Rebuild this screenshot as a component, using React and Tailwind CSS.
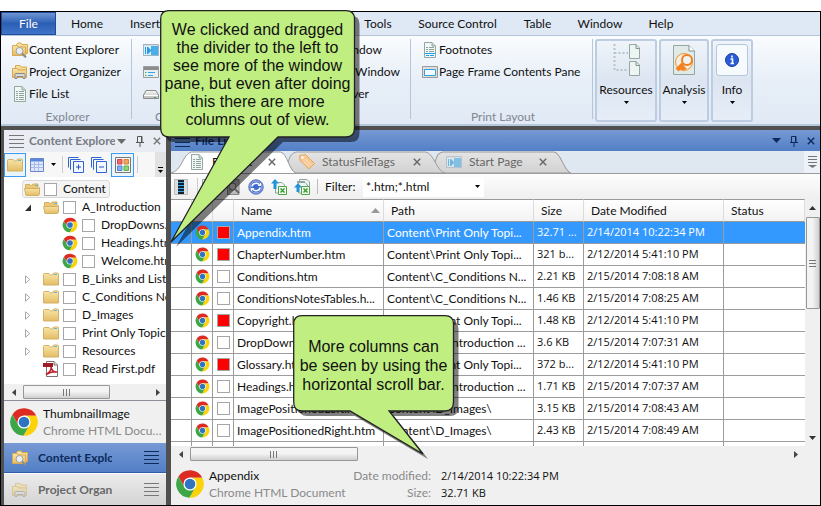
import React from 'react';

const line = { fill: 'none', strokeLinecap: 'butt' };

function Defs() {
  return (
    <svg className="absolute h-0 w-0" aria-hidden="true">
      <defs>
        <linearGradient id="fold" x1="0" y1="0" x2="0" y2="1">
          <stop offset="0" stopColor="#f9e7a9" />
          <stop offset="1" stopColor="#e4bc66" />
        </linearGradient>
        <linearGradient id="chip" x1="0" y1="0" x2="0" y2="1">
          <stop offset="0" stopColor="#f8f8f8" />
          <stop offset="1" stopColor="#b9b9b9" />
        </linearGradient>
        <linearGradient id="tabGrey" x1="0" y1="0" x2="0" y2="1">
          <stop offset="0" stopColor="#e4e4e4" />
          <stop offset="1" stopColor="#d2d2d2" />
        </linearGradient>
      </defs>
    </svg>
  );
}

function Chrome({ className = 'size-4' }) {
  return (
    <svg viewBox="0 0 48 48" className={`${className} shrink-0`} aria-hidden="true">
      <path d="M5.5 12A22 22 0 0 1 43.6 14L24 14L24 24L15.3 29Z" fill="#dd2b23" />
      <path d="M43.6 14A22 22 0 0 1 22.9 46L32.7 29L24 24L24 14Z" fill="#fcd209" />
      <path d="M22.9 46A22 22 0 0 1 5.5 12L15.3 29L24 24L32.7 29Z" fill="#3da747" />
      <circle cx="24" cy="24" r="10.5" fill="#fff" />
      <circle cx="24" cy="24" r="8.5" fill="#2f74c0" />
    </svg>
  );
}

function Folder({ className = 'h-4 w-4' }) {
  return (
    <svg viewBox="0 0 16 16" className={`${className} shrink-0`} aria-hidden="true">
      <path d="M.5 14V3.5Q.5 2.5 1.5 2.5H6L7.500 4H9.500L10.500 2H14.500Q15.500 2 15.500 3V14Z" fill="url(#fold)" stroke="#d3b066" />
      <path d="M11 3.500H14" stroke="#58b8e0" />
    </svg>
  );
}

function OpenFolder() {
  return (
    <svg viewBox="0 0 16 16" className="size-4 shrink-0" aria-hidden="true">
      <path d="M1.500 13V3.500H6L7.500 5L9 3H14V13Z" fill="#ecc873" stroke="#d3b066" />
      <path d="M11 4.500H14" stroke="#58b8e0" />
      <path d="M.5 7.500H14.500L15.500 6.500V13L14.500 14.500H2Z" fill="url(#fold)" stroke="#d3b066" />
    </svg>
  );
}

function FolderSearch() {
  return (
    <svg viewBox="0 0 16 16" className="size-4 shrink-0" aria-hidden="true">
      <path d="M4.500 11.500V2.500L6 1H9L10 2.500H15.500V11.500Z" fill="url(#fold)" stroke="#d9a950" />
      <path d="M.5 13.500V3.500H5L6 5H13.500V13.500Z" fill="url(#fold)" stroke="#d9a950" />
      <circle cx="7.500" cy="9" r="3.500" fill="#e6eef4" stroke="#a0a0a0" />
      <path d="M10 11.500L14 15.500" stroke="#8b8b8b" strokeWidth="2" />
    </svg>
  );
}

function FolderTray({ faded }) {
  return (
    <svg viewBox="0 0 16 16" className={faded ? 'size-4 shrink-0 opacity-50' : 'size-4 shrink-0'} aria-hidden="true">
      <path d="M3.500 10V1.500H8L9 3H14.500V10Z" fill="url(#fold)" stroke="#d9a950" />
      <path d="M.5 13.500V4.500H5L6 6H14.500V13.500Z" fill="url(#fold)" stroke="#d9a950" />
      <path d="M3 14.500V10.500Q3 9.500 4 9.500H12Q13 9.500 13 10.500V14.500H11V12.500H5V14.500Z" fill="#d8d8d8" stroke="#8a8a8a" />
    </svg>
  );
}

function Doc({ accent }) {
  return (
    <svg viewBox="0 0 16 16" className="size-4 shrink-0" aria-hidden="true">
      <path d="M2.500.5H10L13.500 4V15.500H2.500Z" fill="#f2f8f6" stroke="#93a8a2" />
      <path d="M10 .5V4H13.500" fill="#c9d8d3" stroke="#93a8a2" />
      <path d="M4 5.500H6M7 5.500H12M4 7.500H6M7 7.500H12M4 9.500H6M7 9.500H12" stroke="#8fa39e" />
      {accent ? (
        <path d="M3 11.500H13M4 13.500H7M8 13.500H12" stroke="#18a0ea" />
      ) : (
        <path d="M4 11.500H6M7 11.500H12M4 13.500H6M7 13.500H12" stroke="#8fa39e" />
      )}
    </svg>
  );
}

function Frame() {
  return (
    <svg viewBox="0 0 16 16" className="size-4 shrink-0" aria-hidden="true">
      <path d="M.5 2.500H15.500V13.500H.5Z" fill="#ddd" stroke="#9a9a9a" />
      <path d="M2.500 5.500H13.500V11.500H2.500Z" fill="#f4fafd" stroke="#2ca0e0" />
    </svg>
  );
}

function PlayPane({ faded }) {
  return (
    <svg viewBox="0 0 16 16" className={faded ? 'size-4 shrink-0 opacity-60' : 'size-4 shrink-0'} aria-hidden="true">
      <path d="M.5 2.500H15.500V13.500H.5Z" fill="#4aaee8" stroke="#9fb4c0" />
      <path d="M1 3.500H15" stroke="#d5dde2" />
      <path d="M1 4H8V13H1Z" fill="#d7eefb" />
      <path d="M2.500 5V12M4.500 5L8 8.500L4.500 12Z" fill="#2a9be2" stroke="#2a9be2" />
    </svg>
  );
}

function ListPane() {
  return (
    <svg viewBox="0 0 16 16" className="size-4 shrink-0" aria-hidden="true">
      <path d="M.5 2.500H15.500V13.500H.5Z" fill="#e9eef0" stroke="#9c9c9c" />
      <path d="M1 4.500H15" stroke="#8d8d8d" strokeWidth="3" />
      <path d="M2 8.500H3.500M2 11.500H3.500" stroke="#42b53c" />
      <path d="M5 8.500H12M5 11.500H10" stroke="#2da4e8" />
    </svg>
  );
}

function Drive() {
  return (
    <svg viewBox="0 0 16 16" className="size-4 shrink-0" aria-hidden="true">
      <path d="M3 4.500H13L15.500 9V12.500H.5V9Z" fill="url(#chip)" stroke="#8b8b8b" />
      <path d="M1 9.500H15" stroke="#fff" />
      <path d="M11 11.500H13" stroke="#49a04c" />
    </svg>
  );
}

function Pdf() {
  return (
    <svg viewBox="0 0 16 16" className="size-4 shrink-0" aria-hidden="true">
      <path d="M3.500 .5H11L14.500 4V15.500H3.500Z" fill="#fff" stroke="#7f7070" />
      <path d="M11 .5V4H14.500" fill="#ddd" stroke="#7f7070" />
      <path d="M0 2H10V6H0Z" fill="#a21a22" />
      <path d="M3 13.500C7 11 8.500 8 8 6C9 10 11 11.500 14 11C10 10 7 11 3 13.500Z" fill="none" stroke="#c01c26" strokeWidth="1.500" />
    </svg>
  );
}

function Tag() {
  return (
    <svg viewBox="0 0 16 16" className="size-4 shrink-0" aria-hidden="true">
      <path d="M.5 1.500L6.500 .5L15.500 9.500L10 15L1 6.500Z" fill="#f6c993" stroke="#e2a866" />
      <circle cx="3.500" cy="3.500" r="1.300" fill="#fff" />
      <path d="M6 5L12 11M4.500 7L10 12.500" stroke="#fbe5c9" />
    </svg>
  );
}

function Burger({ color }) {
  return (
    <svg viewBox="0 0 15 15" className="size-[15px] shrink-0" aria-hidden="true">
      <path d="M0 1.500H15M0 5.500H15M0 9.500H15M0 13.500H15" stroke={color} />
    </svg>
  );
}

function Pin({ color }) {
  return (
    <svg viewBox="0 0 8 12" className="h-3 w-2 shrink-0" aria-hidden="true">
      <path d="M1.500 7V1.500H6V7M5.500 1.500V7M0 7.500H8M4 8V12" {...line} stroke={color} />
    </svg>
  );
}

function Cross({ color }) {
  return (
    <svg viewBox="0 0 8 8" className="size-2 shrink-0" aria-hidden="true">
      <path d="M.8 .8L7.200 7.200M7.200 .8L.8 7.200" {...line} stroke={color} strokeWidth="1.400" />
    </svg>
  );
}

function Down({ color = '#000', className = 'h-[3px] w-[5px]' }) {
  return (
    <svg viewBox="0 0 10 6" preserveAspectRatio="none" className={`${className} shrink-0`} aria-hidden="true">
      <path d="M0 0H10L5 6Z" fill={color} />
    </svg>
  );
}

function SheetExport({ stack }) {
  return (
    <svg viewBox="0 0 16 16" className="size-4 shrink-0" aria-hidden="true">
      {stack && <path d="M5.500 4V.5H13L15.500 3V8M3.500 4V2.500H11" fill="#eef5f2" stroke="#8fa39e" />}
      <path d="M4.500 3.500H11L13.500 6V14H4.500Z" fill="#eef5f2" stroke="#8fa39e" />
      {stack ? (
        <path d="M4 4L0 8.500H2.500V13H5.500V8.500H8Z" fill="#2493d8" />
      ) : (
        <path d="M4 0L0 4.500H2.500V10H5.500V4.500H8Z" fill="#2493d8" />
      )}
      <path d="M7.500 7.500H15.500V15.500H7.500Z" fill="#f3fbf1" stroke="#4da644" />
      <path d="M9.500 9.500L13.500 13.500M13.500 9.500L9.500 13.500" stroke="#3c9b34" strokeWidth="1.500" />
    </svg>
  );
}

function RibbonItem({ icon, label, children }) {
  return (
    <button type="button" aria-label={label} className="flex h-[22px] items-center gap-px whitespace-nowrap">
      {icon}
      {children && <span>{children}</span>}
    </button>
  );
}

function RibbonGroup({ title, children, className, titleClass = 'text-center' }) {
  return (
    <div className={`flex h-[80px] shrink-0 flex-col border-r border-[#b4c6da] ${className}`}>
      <div className="flex h-[66px] shrink-0 flex-col items-start">{children}</div>
      <div className={`pt-[2px] leading-[20px] text-[#828790] ${titleClass}`}>{title}</div>
    </div>
  );
}

function BigButton({ label, icon, className }) {
  return (
    <button
      type="button"
      className={`flex h-[83px] flex-col items-center rounded-[3px] border-2 border-[#bccde1] bg-linear-to-b from-[#eff4fa] via-[#dce5f1] to-[#e6edf7] ${className}`}
    >
      <span className="mt-[2px] flex h-[34px] items-center">{icon}</span>
      <span className="mt-[5px] leading-[16px]">{label}</span>
      <Down className="mt-[3px] h-[3px] w-[5px]" />
    </button>
  );
}

const menu = [
  ['Home', 'ml-[2px] w-[58px]'],
  ['Insert', 'mr-[177px] w-[58px]'],
  ['Tools', 'w-[54px]'],
  ['Source Control', 'w-[105px]'],
  ['Table', 'w-[55px]'],
  ['Window', 'w-[70px]'],
  ['Help', 'w-[52px]'],
];

function Ribbon() {
  return (
    <header>
      <nav className="flex h-[24px] overflow-hidden border-b border-[#b4c6da] bg-[#dfe9f5]">
        <button type="button" className="w-[55px] shrink-0 border border-[#1e4b9b] bg-linear-to-b from-[#6f94d2] via-[#2b5fb4] to-[#3f74c9] text-white">
          File
        </button>
        {menu.map(([name, cls]) => (
          <button key={name} type="button" className={`shrink-0 ${cls}`}>
            {name}
          </button>
        ))}
      </nav>
      <div className="flex h-[90px] items-start overflow-hidden border-b-2 border-[#b4cadb] bg-linear-to-b from-[#fafcfe] via-[#e8eff8] to-[#e0e9f5] pt-[3px]">
        <RibbonGroup title="Explorer" className="w-[131px] pr-2 pl-[11px]">
          <RibbonItem icon={<FolderSearch />}>Content Explorer</RibbonItem>
          <RibbonItem icon={<FolderTray />}>Project Organizer</RibbonItem>
          <RibbonItem icon={<Doc />}>File List</RibbonItem>
        </RibbonGroup>
        <RibbonGroup title="C" titleClass="pl-[12px]" className="w-[196px] border-transparent pl-[11px]">
          <RibbonItem label="Start" icon={<PlayPane />} />
          <RibbonItem label="Tasks" icon={<ListPane />} />
          <RibbonItem label="Disk" icon={<Drive />} />
        </RibbonGroup>
        <RibbonGroup title="" className="w-[83px] pl-[7px]">
          <RibbonItem><span className="pl-[2px]">Window</span></RibbonItem>
          <RibbonItem><span className="pl-5">Window</span></RibbonItem>
          <RibbonItem>Server</RibbonItem>
        </RibbonGroup>
        <RibbonGroup title="Print Layout" className="w-[182px] pr-2 pl-[11px]">
          <RibbonItem icon={<Doc accent />}>Footnotes</RibbonItem>
          <RibbonItem icon={<Frame />}>Page Frame Contents Pane</RibbonItem>
        </RibbonGroup>
        <div className="ml-[2px] flex gap-[2px]">
          <BigButton
            label="Resources"
            className="w-[62px]"
            icon={
              <svg viewBox="0 0 28 32" className="h-8 w-7">
                <path d="M2.500 0V26H16M2.500 9H16" {...line} stroke="#b4c6c2" strokeWidth="2" strokeDasharray="2 2" />
                <path d="M17.500 .5H24L27.500 4V14.500H17.500ZM17.500 17.500H24L27.500 21V31.500H17.500Z" fill="#edf5f2" stroke="#93a8a2" />
                <path d="M24 .5V4.500H27.500M24 17.500V21.500H27.500" {...line} stroke="#7d938d" />
              </svg>
            }
          />
          <BigButton
            label="Analysis"
            className="w-[50px]"
            icon={
              <svg viewBox="0 0 22 30" className="h-[30px] w-[22px]">
                <path d="M.5 .5H16L21.500 6V29.500H.5Z" fill="#e0ebe8" stroke="#93a8a2" />
                <path d="M16 .5V6H21.500" fill="#fff" stroke="#7d938d" />
                <circle cx="11" cy="17" r="8.500" fill="#f1ede3" stroke="#f59231" />
                <circle cx="14" cy="15" r="5" fill="#edf3f3" stroke="#f27f1b" strokeWidth="2" />
                <path d="M10 19L4 25" stroke="#f58220" strokeWidth="4" />
                <path d="M4 22Q8 27 14 24L10 20Z" fill="#f58220" />
              </svg>
            }
          />
          <BigButton
            label="Info"
            className="w-[42px]"
            icon={
              <span className="flex size-8 items-center justify-center rounded-[3px] border border-[#b3c6dc] bg-[#f7fafd]">
                <svg viewBox="0 0 14 14" className="size-[14px]">
                  <circle cx="7" cy="7" r="6.500" fill="#2a5bd7" stroke="#1c3fa0" />
                  <path d="M7 2.500V4.500M5.500 6H7.500V10.500M5.500 10.500H9" {...line} stroke="#fff" strokeWidth="1.600" />
                </svg>
              </span>
            }
          />
        </div>
      </div>
    </header>
  );
}

const treeRows = [
  ['', 'DropDowns.htm', 2, 'chrome'],
  ['', 'Headings.htm', 2, 'chrome'],
  ['', 'Welcome.htm', 2, 'chrome'],
  ['closed', 'B_Links and Lists', 1, 'folder'],
  ['closed', 'C_Conditions Notes', 1, 'folder'],
  ['closed', 'D_Images', 1, 'folder'],
  ['closed', 'Print Only Topics', 1, 'folder'],
  ['closed', 'Resources', 1, 'folder'],
  ['', 'Read First.pdf', 1, 'pdf'],
];

function TreeCheck({ name }) {
  return (
    <input
      type="checkbox"
      aria-label={name}
      className="ml-1 size-[13px] shrink-0 appearance-none border border-[#a6a6a6] bg-white"
    />
  );
}

function Twisty({ kind }) {
  return (
    <svg viewBox="0 0 6 9" className="h-[9px] w-[6px] shrink-0" aria-hidden="true">
      {kind === 'open' && <path d="M6 1.500V8H0Z" fill="#303030" />}
      {kind === 'closed' && <path d="M.5 .8L4.800 4.500L.5 8.200Z" fill="#fff" stroke="#a6a6a6" />}
    </svg>
  );
}

function TreeItem({ kind, name, depth, icon }) {
  return (
    <li className={`flex h-[18px] items-center ${depth === 2 ? 'pl-[40px]' : 'pl-[21px]'}`}>
      <Twisty kind={depth === 1 ? kind : ''} />
      <span className="w-[12px] shrink-0" />
      {icon === 'chrome' && <Chrome />}
      {icon === 'folder' && <Folder />}
      {icon === 'open' && <OpenFolder />}
      {icon === 'pdf' && <Pdf />}
      <TreeCheck name={name} />
      <span className="ml-[6px] whitespace-nowrap">{name}</span>
    </li>
  );
}

function Grip({ vertical }) {
  return <span className={vertical ? 'block h-[7px] w-[7px] bg-[repeating-linear-gradient(to_bottom,#777_0_1px,transparent_1px_3px)]' : 'block h-[7px] w-[8px] bg-[repeating-linear-gradient(to_right,#777_0_1px,transparent_1px_3px)]'} />;
}

function HScroll({ thumb }) {
  return (
    <div className="flex h-4 items-center bg-[#f0f0f0]">
      <span className="flex w-[19px] justify-center">
        <svg viewBox="0 0 4 7" className="h-[7px] w-1"><path d="M4 0V7L0 3.500Z" fill="#444" /></svg>
      </span>
      <div className="flex flex-1">
        <div className={`flex h-[14px] items-center justify-center rounded-[1px] border border-[#979797] bg-linear-to-b from-[#f4f4f4] from-45% to-[#d0d0d0] ${thumb}`}>
          <Grip />
        </div>
      </div>
      <span className="flex w-[17px] justify-center">
        <svg viewBox="0 0 4 7" className="h-[7px] w-1"><path d="M0 0V7L4 3.500Z" fill="#444" /></svg>
      </span>
    </div>
  );
}

function CopyIcon({ plus }) {
  return (
    <svg viewBox="0 0 16 16" className="size-4 shrink-0" aria-hidden="true">
      <path d="M.5 10.500V.5H10.500M3 12.500H2.500V2.500H12.500" {...line} stroke="#2f63d6" />
      <path d="M5.500 4.500H15.500V15.500H5.500Z" fill="#f3f7ff" stroke="#2f63d6" />
      <path d={plus ? 'M8 10H13M10.500 7.500V12.500' : 'M8 10H13'} stroke="#2450c0" />
    </svg>
  );
}

function Explorer() {
  return (
    <aside className="flex w-[162px] shrink-0 flex-col bg-[#f0f0f0]">
      <div className="flex h-[22px] items-center bg-[#e9edf3] pl-[5px]">
        <Burger color="#777" />
        <h2 className="ml-[5px] w-[86px] overflow-hidden font-bold whitespace-nowrap text-[#777c86]">Content Explorer</h2>
        <Down color="#6b6b6b" className="ml-[2px] h-[5px] w-[9px]" />
        <span className="w-[10px]" />
        <Pin color="#555" />
        <span className="w-[9px]" />
        <Cross color="#777" />
      </div>
      <div className="flex h-[25px] items-center bg-[#f7f7f7]">
        <button type="button" aria-label="Folders" className="flex h-[24px] w-[22px] items-center justify-center border border-[#3c9bf0] bg-[#eaf4fd]">
          <Folder />
        </button>
        <button type="button" aria-label="Grid view" className="ml-1 flex items-center">
          <svg viewBox="0 0 14 14" className="size-[14px]">
            <path d="M.5 .5H13.500V13.500H.5Z" fill="#dfe8fa" stroke="#6a86c5" />
            <path d="M1 2H13" stroke="#5c86d6" strokeWidth="3" />
            <path d="M1 6.500H13M1 9.500H13M4.500 4V13M8.500 4V13" stroke="#a9bce6" />
          </svg>
          <Down className="ml-[7px] h-[3px] w-[5px]" />
        </button>
        <span className="ml-[6px] h-[17px] w-px bg-[#ccc]" />
        <button type="button" aria-label="Expand" className="ml-[5px]"><CopyIcon plus /></button>
        <button type="button" aria-label="Collapse" className="ml-[7px]"><CopyIcon /></button>
        <button type="button" aria-label="Colors" className="ml-1 flex h-[24px] w-[23px] items-center justify-center border border-[#3c9bf0] bg-[#eaf4fd]">
          <svg viewBox="0 0 16 16" className="size-4">
            <path d="M.5 .5H15.500V15.500H.5Z" fill="#f6f6f6" stroke="#777" />
            <path d="M2.500 2.500H7V7H2.500Z" fill="#ee6a6a" stroke="#d04848" />
            <path d="M9 2.500H13.500V7H9Z" fill="#f2a35c" stroke="#d98238" />
            <path d="M2.500 9H7V13.500H2.500Z" fill="#7fb0f4" stroke="#4f86d8" />
            <path d="M9 9H13.500V13.500H9Z" fill="#8bd674" stroke="#5cb248" />
          </svg>
        </button>
        <span className="ml-[3px] h-[17px] w-px bg-[#ccc]" />
        <button type="button" aria-label="More" className="ml-auto flex h-[25px] w-[11px] flex-col items-center justify-end bg-[#e2e2e2] pb-1">
          <span className="mb-[2px] h-px w-[5px] bg-black" />
          <Down />
        </button>
      </div>
      <ul className="h-[207px] overflow-hidden bg-white pt-[3px]">
        <li className="flex h-[18px] pl-[18px]">
          <span className="flex items-center rounded-[3px] border border-[#d9d9d9] bg-[#f4f4f4] pr-[3px] pl-px">
            <OpenFolder />
            <TreeCheck name="Content" />
            <span className="ml-[6px]">Content</span>
          </span>
        </li>
        <TreeItem kind="open" name="A_Introduction" depth={1} icon="open" />
        {treeRows.map(([kind, name, depth, icon]) => (
          <TreeItem key={name} kind={kind} name={name} depth={depth} icon={icon} />
        ))}
      </ul>
      <HScroll thumb="w-[87px]" />
      <div className="flex h-[43px] items-center border-t border-[#8c8c9c] pl-[5px]">
        <Chrome className="size-[30px]" />
        <div className="ml-1 min-w-0 leading-[17px]">
          <div>ThumbnailImage</div>
          <div className="truncate text-[#8a8a8a]">Chrome HTML Document</div>
        </div>
      </div>
      <button type="button" className="flex h-[30px] items-center border-b border-[#2f5da8] bg-linear-to-b from-[#7799d4] to-[#527fc6] pl-2 font-bold text-[#0c2a5c]">
        <FolderSearch />
        <span className="ml-[10px] w-[74px] overflow-hidden text-left whitespace-nowrap">Content Explorer</span>
        <span className="ml-8"><Burger color="#0c2a5c" /></span>
      </button>
      <button type="button" className="flex h-[32px] items-center border-t border-white bg-linear-to-b from-[#ebebeb] to-[#d4d4d4] pl-2 font-bold text-[#686868]">
        <FolderTray faded />
        <span className="ml-[10px] w-[74px] overflow-hidden text-left whitespace-nowrap">Project Organizer</span>
        <span className="ml-8"><Burger color="#777" /></span>
      </button>
    </aside>
  );
}

function Tab({ icon, label, className, active }) {
  return (
    <div className={`relative flex h-[22px] items-center ${className}`}>
      <svg viewBox="0 0 160 22" preserveAspectRatio="none" className="absolute inset-0 h-full w-full" aria-hidden="true">
        <path
          d={active ? 'M0 22C14 20 15 3 26 1H140C149 2 151 20 160 22' : 'M0 12C2 4 4 2 9 1H140C149 2 151 20 160 22H6Z'}
          fill={active ? '#fff' : 'url(#tabGrey)'}
          stroke="#9b9b9b"
          vectorEffect="non-scaling-stroke"
        />
      </svg>
      <button type="button" className={`relative flex items-center gap-[7px] whitespace-nowrap ${active ? 'ml-[18px]' : 'ml-[11px] text-[#666]'}`}>
        {icon}
        {label}
      </button>
      <button type="button" aria-label={`Close ${label}`} className={`relative ml-auto ${active ? 'mr-[20px]' : 'mr-[24px]'}`}>
        <Cross color="#666" />
      </button>
    </div>
  );
}

const files = [
  ['Appendix.htm', 'Content\\Print Only Topi...', '32.71 ...', '2/14/2014 10:22:34 PM', 1],
  ['ChapterNumber.htm', 'Content\\Print Only Topi...', '321 b...', '2/12/2014 5:41:10 PM', 1],
  ['Conditions.htm', 'Content\\C_Conditions N...', '2.21 KB', '2/15/2014 7:08:18 AM', 0],
  ['ConditionsNotesTables.h...', 'Content\\C_Conditions N...', '1.46 KB', '2/15/2014 7:08:25 AM', 0],
  ['Copyright.htm', 'Content\\Print Only Topi...', '1.48 KB', '2/12/2014 5:41:10 PM', 1],
  ['DropDowns.htm', 'Content\\A_Introduction ...', '3.6 KB', '2/15/2014 7:07:31 AM', 0],
  ['Glossary.htm', 'Content\\Print Only Topi...', '372 b...', '2/12/2014 5:41:10 PM', 1],
  ['Headings.htm', 'Content\\A_Introduction ...', '1.71 KB', '2/15/2014 7:07:37 AM', 0],
  ['ImagePositionedLeft.htm', 'Content\\D_Images\\', '3.15 KB', '2/15/2014 7:08:43 AM', 0],
  ['ImagePositionedRight.htm', 'Content\\D_Images\\', '2.43 KB', '2/15/2014 7:08:49 AM', 0],
];

const numeric = "font-['Open_Sans','Noto_Sans',sans-serif] text-[11px]";

function FileTable() {
  return (
    <div className="h-[247px] min-w-0 flex-1 overflow-hidden bg-white">
      <table className="w-full table-fixed border-separate border-spacing-0 text-left">
        <colgroup>
          <col className="w-[21px]" />
          <col className="w-[21px]" />
          <col className="w-[21px]" />
          <col className="w-[150px]" />
          <col className="w-[150px]" />
          <col className="w-[50px]" />
          <col className="w-[140px]" />
          <col />
        </colgroup>
        <thead>
          <tr className="h-[23px] bg-linear-to-b from-white to-[#f2f2f2] [&>th]:border-t [&>th]:border-r [&>th]:border-b [&>th]:border-t-[#999] [&>th]:border-r-[#dcdcdc] [&>th]:border-b-[#999] [&>th]:p-0 [&>th]:pl-[7px] [&>th]:font-normal [&>th]:whitespace-nowrap">
            <th />
            <th />
            <th />
            <th>
              <span className="flex items-center justify-between pr-[3px]">
                Name
                <svg viewBox="0 0 9 5" className="h-[5px] w-[9px]"><path d="M0 5H9L4.500 0Z" fill="#999" /></svg>
              </span>
            </th>
            <th>Path</th>
            <th>Size</th>
            <th>Date Modified</th>
            <th>Status</th>
          </tr>
        </thead>
        <tbody>
          {files.map(([name, path, size, date, flag], i) => (
            <tr
              key={name}
              className={`h-[22px] [&>td]:overflow-hidden [&>td]:border-r [&>td]:border-b [&>td]:border-[#9c9c9c] [&>td]:p-0 [&>td]:whitespace-nowrap [&>td:last-child]:border-r-0 ${i === 0 ? 'bg-[#3399ff] text-white' : ''}`}
            >
              <td />
              <td><Chrome className="mx-auto size-[15px]" /></td>
              <td>
                <span className={`mx-auto block size-[13px] border border-[#a6a6a6] ${flag ? 'bg-[#ff0000]' : 'bg-white'}`} />
              </td>
              <td><span className="pl-[3px]">{name}</span></td>
              <td><span className="pl-[3px]">{path}</span></td>
              <td className={numeric}><span className="pl-[3px]">{size}</span></td>
              <td className={numeric}><span className="pl-[3px]">{date}</span></td>
              <td />
            </tr>
          ))}
          <tr className="h-[6px] [&>td]:border-r [&>td]:border-[#9c9c9c] [&>td]:p-0 [&>td:last-child]:border-r-0">
            <td /><td /><td /><td /><td /><td /><td /><td />
          </tr>
        </tbody>
      </table>
    </div>
  );
}

function VScroll() {
  return (
    <div className="flex w-[15px] shrink-0 flex-col items-center bg-[#f0f0f0]">
      <span className="flex h-[18px] items-center"><svg viewBox="0 0 7 4" className="h-1 w-[7px]"><path d="M0 4H7L3.500 0Z" fill="#333" /></svg></span>
      <div className="flex h-[92px] w-[14px] items-center justify-center rounded-[1px] border border-[#979797] bg-linear-to-r from-[#f4f4f4] from-45% to-[#d0d0d0]">
        <Grip vertical />
      </div>
      <span className="mt-auto flex h-[17px] items-center"><Down color="#333" className="h-1 w-[7px]" /></span>
    </div>
  );
}

function FileList() {
  return (
    <main className="flex min-w-0 flex-1 flex-col bg-[#f0f0f0]">
      <div className="flex h-[21px] items-center bg-linear-to-b from-[#7799d4] to-[#527fc6] pr-[5px] pl-1 text-[#0c2a5c]">
        <Burger color="#0c2a5c" />
        <h2 className="ml-[5px] font-bold">File List</h2>
        <Down color="#0c2a5c" className="ml-auto h-[5px] w-[9px]" />
        <span className="w-[9px]" />
        <Pin color="#0c2a5c" />
        <span className="w-[9px]" />
        <Cross color="#0c2a5c" />
      </div>
      <div className="flex h-[23px] border-b border-[#9b9b9b] bg-[#dfe7f1]">
        <Tab active icon={<Doc />} label="File List" className="z-10 w-[125px]" />
        <Tab icon={<Tag />} label="StatusFileTags" className="z-5 -ml-[8px] w-[157px]" />
        <Tab icon={<PlayPane faded />} label="Start Page" className="-ml-[10px] w-[136px]" />
        <button type="button" aria-label="Tab list" className="ml-auto flex w-4 flex-col items-center justify-center bg-[#edf2f8]">
          <svg viewBox="0 0 9 12" className="h-3 w-[9px]">
            <path d="M0 .5H9M0 3.500H9M0 6.500H9" stroke="#777" />
            <path d="M0 9H9L4.500 12Z" fill="#777" />
          </svg>
        </button>
      </div>
      <div className="flex h-[25px] items-center bg-linear-to-b from-[#fdfdfd] to-[#efefef] pl-[3px]">
        <button type="button" aria-label="List">
          <svg viewBox="0 0 14 16" className="h-4 w-[14px]">
            <path d="M.5 .5H13.500V15.500H.5Z" fill="#ddd" stroke="#bbb" />
            <path d="M4 1H10V15H4Z" fill="#123" />
            <path d="M4 3.500H10M4 6.500H10M4 9.500H10M4 12.500H10" stroke="#30a5e8" />
          </svg>
        </button>
        <span className="mr-[2px] ml-[9px] h-[17px] w-px bg-[#ccc]" />
        <button type="button" aria-label="Open" className="mr-[9px]"><Doc /></button>
        <button type="button" aria-label="Preview">
          <svg viewBox="0 0 16 16" className="size-4">
            <path d="M2.500 .5H14V15.500H2.500Z" fill="#bbb" stroke="#888" />
            <circle cx="7.500" cy="7.500" r="3.500" fill="#ddd" stroke="#666" />
            <path d="M10 10L14 14" stroke="#666" strokeWidth="2" />
          </svg>
        </button>
        <button type="button" aria-label="Refresh" className="ml-[7px]">
          <svg viewBox="0 0 16 16" className="size-4">
            <circle cx="8" cy="8" r="7.300" fill="#4169d2" stroke="#7c88ad" />
            <circle cx="8" cy="8" r="6" fill="none" stroke="#9ab4f2" />
            <path d="M4 7.500A4 3.500 0 0 1 11 5.500M12 8.500A4 3.500 0 0 1 5 10.500" {...line} stroke="#fff" strokeWidth="1.700" />
            <path d="M9.500 7H13V3.500ZM6.500 9H3V12.500Z" fill="#fff" />
          </svg>
        </button>
        <button type="button" aria-label="Export" className="ml-[7px]"><SheetExport /></button>
        <button type="button" aria-label="Export all" className="ml-[7px]"><SheetExport stack /></button>
        <span className="mx-[7px] h-[15px] w-px bg-[#bbb]" />
        <label htmlFor="filter" className="w-[30px]">Filter:</label>
        <div className="relative ml-2 flex w-[121px] items-center bg-white">
          <select id="filter" className="h-[20px] w-full appearance-none bg-white pl-[3px]">
            <option>*.htm;*.html</option>
          </select>
          <Down className="absolute right-1 h-[3px] w-[5px]" />
        </div>
      </div>
      <div className="flex">
        <FileTable />
        <VScroll />
      </div>
      <div className="pr-[16px]"><HScroll thumb="w-[168px]" /></div>
      <footer className="flex h-[43px] items-center pl-1 leading-[17px]">
        <Chrome className="size-[30px]" />
        <div className="ml-1 w-[138px] whitespace-nowrap">
          <div>Appendix</div>
          <div className="text-[#8a8a8a]">Chrome HTML Document</div>
        </div>
        <dl className="grid grid-cols-[84px_auto] gap-x-[10px] whitespace-nowrap">
          <dt className="text-right text-[#8a8a8a]">Date modified:</dt>
          <dd className={numeric}>2/14/2014 10:22:34 PM</dd>
          <dt className="text-right text-[#8a8a8a]">Size:</dt>
          <dd className={numeric}>32.71 KB</dd>
        </dl>
      </footer>
    </main>
  );
}

function Callout({ lines, className, textClass, w, h, d, viewBox }) {
  return (
    <div className={`pointer-events-none absolute z-20 ${className}`}>
      <svg viewBox={viewBox} width={w} height={h} className="absolute inset-0" aria-hidden="true">
        <path d={d} transform="translate(5 5)" fill="#000" fillOpacity=".5" />
        <path d={d} fill="#c0ee81" stroke="#222" strokeWidth="1.300" />
      </svg>
      <p className={`relative text-center font-['Liberation_Sans',Arial,sans-serif] text-[16px] whitespace-nowrap ${textClass}`}>
        {lines.map((text) => (
          <span key={text} className="block">{text}</span>
        ))}
      </p>
    </div>
  );
}

export default function App() {
  return (
    <div className="relative w-full overflow-hidden bg-white pt-[11px] font-['Lato','Noto_Sans',sans-serif] text-[12px] text-[#111]">
      <Defs />
      <div className="border border-black">
        <Ribbon />
        <div className="flex bg-[#505050] pt-1 pl-[3px]">
          <Explorer />
          <span className="w-[5px] shrink-0" />
          <FileList />
        </div>
      </div>
      <Callout
        className="top-[10px] left-[160px] w-[195px]"
        textClass="pt-[11px] leading-[18px]"
        viewBox="0 0 202 245"
        w={202}
        h={245}
        d="M9 .7H186Q194.500 .7 194.500 9V118Q194.500 127 186 127H118L11 232L69 127H9Q.7 127 .7 118V9Q.7 .7 9 .7Z"
        lines={['We clicked and dragged', 'the divider to the left to', 'see more of the window', 'pane, but even after doing', 'this there are more', 'columns out of view.']}
      />
      <Callout
        className="top-[315px] left-[293px] w-[161px]"
        textClass="pt-[22px] leading-[19px]"
        viewBox="0 0 170 150"
        w={170}
        h={150}
        d="M9 .7H152Q160.500 .7 160.500 9V87Q160.500 96 152 96H96L130 139L57 96H9Q.7 96 .7 87V9Q.7 .7 9 .7Z"
        lines={['More columns can', 'be seen by using the', 'horizontal scroll bar.']}
      />
    </div>
  );
}
